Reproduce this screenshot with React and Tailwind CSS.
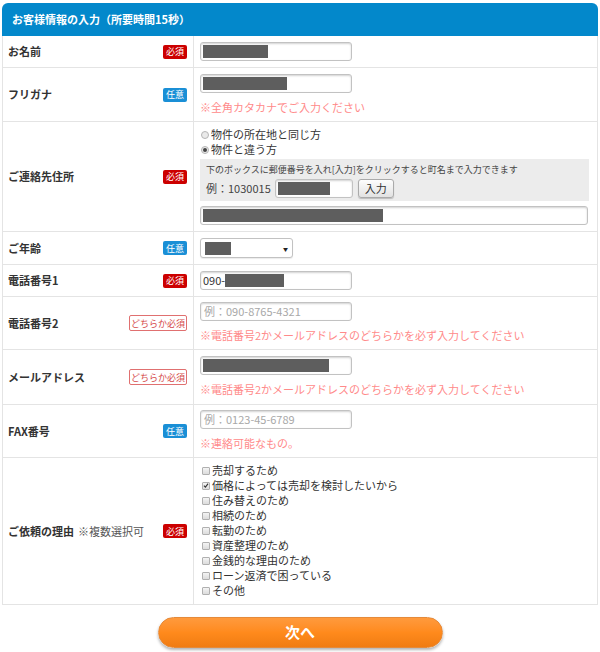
import React from "react";

const FONT = { fontFamily: '"Noto Sans CJK JP", "Noto Sans", sans-serif' };

function Badge({ type }) {
  if (type === "req")
    return (
      <span className="inline-flex h-[14px] w-[24px] items-center justify-center rounded-[2px] bg-[#cc0000] text-[9px] leading-none text-white">
        必須
      </span>
    );
  if (type === "opt")
    return (
      <span className="inline-flex h-[14px] w-[24px] items-center justify-center rounded-[2px] bg-[#1a8fd6] text-[9px] leading-none text-white">
        任意
      </span>
    );
  return (
    <span className="inline-flex h-[16px] w-[58px] items-center justify-center rounded-[2px] border border-[#e07070] bg-white text-[9px] leading-none text-[#d54848]">
      どちらか必須
    </span>
  );
}

function Redact({ w, h = 13 }) {
  return <span className="inline-block bg-[#5e5e5e]" style={{ width: w, height: h }} />;
}

function Input({ w = 152, children, placeholder }) {
  return (
    <div
      className="flex h-[19px] items-center rounded-[3px] border border-[#c2c2c2] bg-white pl-[2px] shadow-[inset_0_1px_2px_rgba(0,0,0,0.18)]"
      style={{ width: w }}
    >
      {placeholder ? (
        <span className="pl-[1px] text-[11px] leading-none text-[#a8a8a8]">{placeholder}</span>
      ) : (
        children
      )}
    </div>
  );
}

function Note({ children }) {
  return <div className="mt-[6px] text-[11px] leading-[16px] text-[#ff8a8a]">{children}</div>;
}

function Row({ label, badge, children, cls = "py-[6px]", last }) {
  return (
    <div className={`flex ${last ? "" : "border-b border-[#e4e4e4]"}`}>
      <div className="flex w-[191px] shrink-0 items-center justify-between border-r border-[#e4e4e4] pl-[5px] pr-[6px]">
        <div className="text-[11px] font-bold text-[#333]">{label}</div>
        <Badge type={badge} />
      </div>
      <div className={`flex-1 pl-[6px] pr-[8px] ${cls}`}>{children}</div>
    </div>
  );
}

function Radio({ checked, children }) {
  return (
    <div className="flex h-[15px] items-center text-[11px] text-[#333]">
      <span className="mr-[2px] ml-[1px] flex h-[8px] w-[8px] items-center justify-center rounded-full border border-[#b5b5b5] bg-[#eaeaea]">
        {checked && <span className="h-[4px] w-[4px] rounded-full bg-[#444]" />}
      </span>
      {children}
    </div>
  );
}

function Check({ checked, children }) {
  return (
    <div className="flex h-[15px] items-center text-[11px] text-[#333]">
      <span className="mr-[2px] ml-[2px] flex h-[8px] w-[8px] items-center justify-center rounded-[1px] border border-[#b0b0b0] bg-gradient-to-b from-[#f4f4f4] to-[#dcdcdc]">
        {checked && (
          <svg width="7" height="7" viewBox="0 0 8 8">
            <path d="M1.2 4.2 L3.2 6.2 L6.8 1.6" fill="none" stroke="#333" strokeWidth="1.5" />
          </svg>
        )}
      </span>
      {children}
    </div>
  );
}

export default function App() {
  const reasons = [
    ["売却するため", false],
    ["価格によっては売却を検討したいから", true],
    ["住み替えのため", false],
    ["相続のため", false],
    ["転勤のため", false],
    ["資産整理のため", false],
    ["金銭的な理由のため", false],
    ["ローン返済で困っている", false],
    ["その他", false],
  ];
  return (
    <div className="h-[652px] w-[600px] bg-white pt-[3px]" style={FONT}>
      <div className="ml-[2px] w-[596px]">
        <div className="flex h-[33px] items-center rounded-t-[6px] bg-[#0388cb] pl-[10px] text-[11px] font-bold text-white">
          お客様情報の入力（所要時間15秒）
        </div>
        <div className="border-x border-b border-[#e4e4e4]">
          <Row label="お名前" badge="req" cls="py-[6px]">
            <Input>
              <Redact w={65} />
            </Input>
          </Row>
          <Row label="フリガナ" badge="opt" cls="pt-[6px] pb-[6px]">
            <Input>
              <Redact w={84} />
            </Input>
            <Note>※全角カタカナでご入力ください</Note>
          </Row>
          <Row label="ご連絡先住所" badge="req" cls="pt-[5px] pb-[6px]">
            <Radio>物件の所在地と同じ方</Radio>
            <Radio checked>物件と違う方</Radio>
            <div className="mt-[2px] bg-[#ececec] px-[6px] pt-[4px] pb-[3px]">
              <div className="text-[9px] leading-[14px] text-[#444]">
                下のボックスに郵便番号を入れ[入力]をクリックすると町名まで入力できます
              </div>
              <div className="mt-[2px] flex h-[19px] items-center">
                <span className="mr-[4px] text-[11px] text-[#444]">例：1030015</span>
                <Input w={78}>
                  <Redact w={52} />
                </Input>
                <button className="ml-[5px] flex h-[19px] w-[36px] items-center justify-center rounded-[3px] border border-[#aaa] bg-gradient-to-b from-[#fdfdfd] to-[#e2e2e2] text-[11px] text-[#333] shadow-[0_1px_1px_rgba(0,0,0,0.2)]">
                  入力
                </button>
              </div>
            </div>
            <div className="mt-[5px]">
              <Input w={388}>
                <Redact w={180} />
              </Input>
            </div>
          </Row>
          <Row label="ご年齢" badge="opt" cls="py-[6px]">
            <div className="flex h-[20px] w-[93px] items-center justify-between rounded-[3px] border border-[#c2c2c2] bg-white pl-[4px] pr-[4px] shadow-[0_1px_1px_rgba(0,0,0,0.08)]">
              <Redact w={26} />
              <span className="text-[5px] leading-none text-[#222]">▼</span>
            </div>
          </Row>
          <Row label="電話番号1" badge="req" cls="py-[6px]">
            <Input>
              <span className="text-[11px] leading-none text-[#333]">090-</span>
              <Redact w={59} />
            </Input>
          </Row>
          <Row label="電話番号2" badge="either" cls="pt-[5px] pb-[6px]">
            <Input placeholder="例：090-8765-4321" />
            <Note>※電話番号2かメールアドレスのどちらかを必ず入力してください</Note>
          </Row>
          <Row label="メールアドレス" badge="either" cls="pt-[6px] pb-[7px]">
            <Input>
              <Redact w={126} />
            </Input>
            <Note>※電話番号2かメールアドレスのどちらかを必ず入力してください</Note>
          </Row>
          <Row label="FAX番号" badge="opt" cls="pt-[5px] pb-[6px]">
            <Input placeholder="例：0123-45-6789" />
            <Note>※連絡可能なもの。</Note>
          </Row>
          <div className="flex">
            <div className="flex w-[191px] shrink-0 items-center justify-between border-r border-[#e4e4e4] pl-[5px] pr-[6px]">
              <div className="text-[11px] text-[#333]">
                <span className="font-bold">ご依頼の理由</span>
                <span className="ml-[4px] text-[#555]">※複数選択可</span>
              </div>
              <Badge type="req" />
            </div>
            <div className="flex-1 pl-[6px] pt-[5px] pb-[6px]">
              {reasons.map(([t, c]) => (
                <Check key={t} checked={c}>
                  {t}
                </Check>
              ))}
            </div>
          </div>
        </div>
      </div>
      <div className="mt-[12px] flex justify-center">
        <button className="flex h-[31px] w-[285px] items-center justify-center rounded-full border border-[#e58a3a] bg-gradient-to-b from-[#ff9a3c] via-[#ff8a1c] to-[#f07c12] text-[15px] font-bold text-white shadow-[0_2px_3px_rgba(0,0,0,0.3)]">
          次へ
        </button>
      </div>
    </div>
  );
}
